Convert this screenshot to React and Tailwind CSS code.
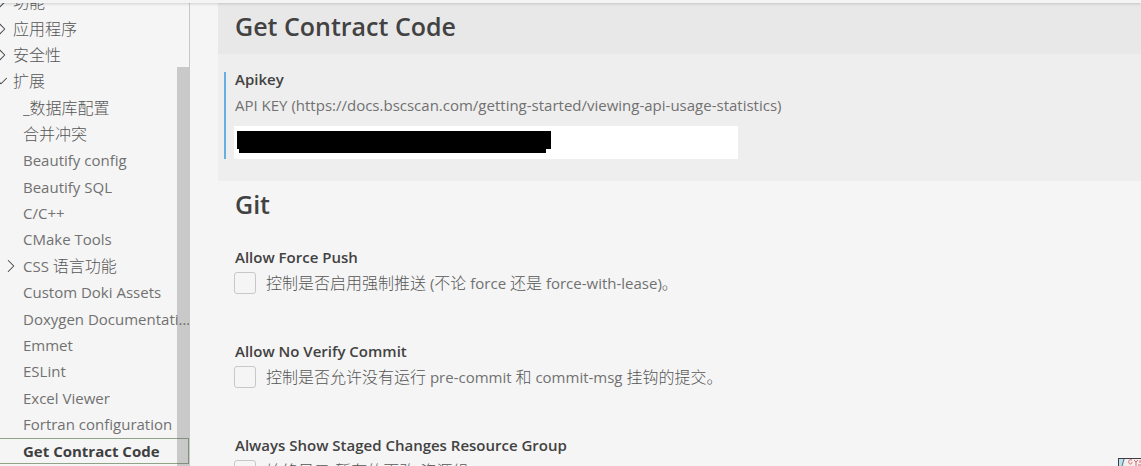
import { ChevronDown, ChevronRight } from "lucide-react";

const tree = [
  { label: "功能", level: 0, icon: "right" },
  { label: "应用程序", level: 0, icon: "right" },
  { label: "安全性", level: 0, icon: "right" },
  { label: "扩展", level: 0, icon: "down" },
  { label: "_数据库配置", level: 1 },
  { label: "合并冲突", level: 1 },
  { label: "Beautify config", level: 1 },
  { label: "Beautify SQL", level: 1 },
  { label: "C/C++", level: 1 },
  { label: "CMake Tools", level: 1 },
  { label: "CSS 语言功能", level: 1, icon: "right" },
  { label: "Custom Doki Assets", level: 1 },
  { label: "Doxygen Documentation", level: 1 },
  { label: "Emmet", level: 1 },
  { label: "ESLint", level: 1 },
  { label: "Excel Viewer", level: 1 },
  { label: "Fortran configuration", level: 1 },
  { label: "Get Contract Code", level: 1, selected: true },
];

const gitSettings = [
  {
    id: "force-push",
    title: "Allow Force Push",
    text: "控制是否启用强制推送 (不论 force 还是 force-with-lease)。",
  },
  {
    id: "no-verify",
    title: "Allow No Verify Commit",
    text: "控制是否允许没有运行 pre-commit 和 commit-msg 挂钩的提交。",
  },
  {
    id: "staged",
    title: "Always Show Staged Changes Resource Group",
    text: "始终显示“暂存的更改”资源组。",
  },
];

// Ideographs are set one pixel larger and lighter than the Latin text beside them.
function Mixed({ text }) {
  return text.split(/([\u3000-\u9fff]+)/).map((part, i) =>
    i % 2 ? (
      <span key={i} className="text-[16px] font-light text-[#555555]">
        {part}
      </span>
    ) : (
      part
    )
  );
}

function TreeItem({ label, level, icon, selected }) {
  const Icon = icon === "down" ? ChevronDown : ChevronRight;
  return (
    <li className="flex min-h-0 min-w-0">
      <button
        type="button"
        className={
          "flex w-full min-w-0 items-center border-y text-left " +
          (selected
            ? "border-r border-[#8fa486] font-bold text-[#3f3f3f]"
            : "border-transparent")
        }
      >
        <span className={level ? "w-[23px] shrink-0" : "flex w-[13px] shrink-0 justify-end pr-1"}>
          {icon && (
            <Icon
              size={22}
              strokeWidth={1.1}
              className={"shrink-0 text-[#424242] " + (icon === "down" ? "-mr-[3px]" : "-mr-1")}
            />
          )}
        </span>
        <span className="-mr-1 truncate">
          <Mixed text={label} />
        </span>
      </button>
    </li>
  );
}

function Setting({ id, title, text }) {
  return (
    <section className="flex h-[94px] flex-col gap-[6px] px-4">
      <h3 className="pl-px leading-[18px] font-semibold text-[#424242]">{title}</h3>
      <label htmlFor={id} className="flex items-center gap-2.5 leading-[22px]">
        <input
          id={id}
          type="checkbox"
          className="size-[22px] shrink-0 appearance-none rounded-[3px] border border-[#c8c8c8] bg-[#f5f5f5]"
        />
        <span className="whitespace-nowrap">
          <Mixed text={text} />
        </span>
      </label>
    </section>
  );
}

export default function App() {
  return (
    <div className="relative flex h-screen flex-col overflow-hidden bg-[#f5f5f5] font-['Open_Sans','Noto_Sans_CJK_SC',sans-serif] text-[15px] text-[#717171]">
      <header className="z-10 h-[3px] shrink-0 bg-[#f4f4f4] shadow-[0_1px_3px_rgba(0,0,0,0.16)]" />
      <div className="flex min-h-0 flex-1">
        <nav className="relative w-[190px] shrink-0 overflow-hidden border-r border-[#c8c8c8]">
          <ul className="-mt-[14px] grid h-[475px] auto-rows-fr grid-cols-1">
            {tree.map((item) => (
              <TreeItem key={item.label} {...item} />
            ))}
          </ul>
          <div className="absolute top-16 right-0 bottom-0 w-3 bg-[#646464]/30" />
        </nav>
        <main className="ml-7 min-w-0 flex-1 overflow-hidden">
          <h2 className="bg-[#e8e8e8] px-[17px] pt-[5px] pb-2.5 text-[25px] leading-9 font-semibold text-[#424242]">
            Get Contract Code
          </h2>
          <section className="bg-[#eeeeee] px-1.5 pt-[18px] pb-[22px]">
            <div className="border-l-2 border-[#66afe0] pl-2">
              <label htmlFor="apikey" className="block pl-px leading-[14px] font-semibold text-[#424242]">
                Apikey
              </label>
              <p className="pt-2 pb-2.5 pl-px leading-[22px]">
                API KEY (https://docs.bscscan.com/getting-started/viewing-api-usage-statistics)
              </p>
              <div className="relative w-[504px] max-w-full">
                <input id="apikey" type="text" className="block h-[33px] w-full bg-white px-1" />
                <div className="absolute top-[5px] left-[3px] h-[18px] w-[314px] bg-black" />
                <div className="absolute top-[23px] left-[5px] h-1 w-[307px] bg-black" />
              </div>
            </div>
          </section>
          <h2 className="px-[17px] pt-[5px] pb-[26px] text-[25px] leading-9 font-semibold text-[#424242]">
            Git
          </h2>
          {gitSettings.map((setting) => (
            <Setting key={setting.id} {...setting} />
          ))}
        </main>
      </div>
      <svg
        className="absolute right-0 bottom-0"
        width="23"
        height="8"
        viewBox="0 0 23 8"
        aria-hidden="true"
      >
        <path d="M0 0h23v8H0z" fill="#403c43" />
        <path d="M1 1h22v7H1z" fill="#b9e1ec" />
        <path d="M7 1h16v7H5z" fill="#f5eeee" />
        <path d="M6 1 4 8" stroke="#66777c" />
        <path
          d="M14 2c-3-1-4 1-3 3 1 2 3 1 3-1M16 2l2 2 2-2M18 4v4M22 2v3M20 7h3"
          fill="none"
          stroke="#d9686e"
        />
      </svg>
    </div>
  );
}
